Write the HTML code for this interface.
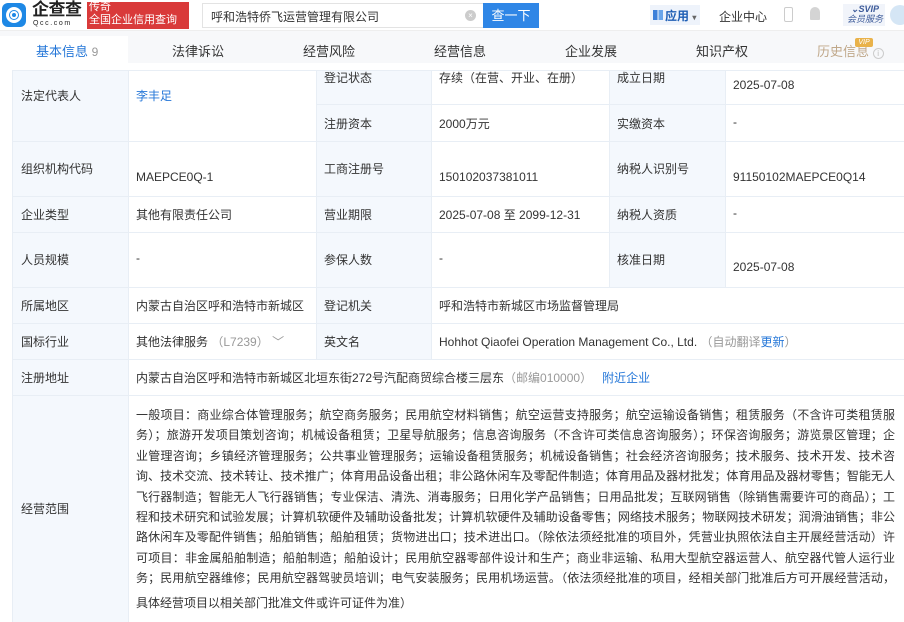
<!DOCTYPE html>
<html><head><meta charset="utf-8"><style>
*{margin:0;padding:0;box-sizing:border-box}
body{width:904px;height:622px;overflow:hidden;background:#fff;font-family:"Liberation Sans","Noto Sans CJK SC",sans-serif;font-size:12px;color:#333;position:relative}
.a{position:absolute}
.top{left:0;top:0;width:904px;height:31px;background:#fff;border-bottom:1px solid #eee}
.tabs{left:0;top:31px;width:904px;height:32px;background:#f7f8fa}
.tab{position:absolute;top:41px;font-size:13px;color:#333}
.lbl{background:#f4f8fd}
.l{position:absolute;background:#e8eef5}
</style></head><body>
<div class="a top"></div>
<!-- logo -->
<div class="a" style="left:2px;top:3px;width:24px;height:24px;border-radius:6px;background:#1e88e5"></div>
<div class="a" style="left:6px;top:7px;width:16px;height:16px;border-radius:50%;border:3px solid #fff"></div>
<div class="a" style="left:10px;top:11px;width:8px;height:8px;border-radius:50%;border:2px solid #fff"></div>
<div class="a" style="left:32px;top:0px;font-size:17px;line-height:20px;color:#222;font-weight:bold;letter-spacing:-0.5px">企查查</div>
<div class="a" style="left:33px;top:20px;font-size:7px;line-height:8px;color:#222;letter-spacing:1.6px">Qcc.com</div>
<div class="a" style="left:87px;top:2px;width:102px;height:27px;background:#d93a3a"></div>
<div class="a" style="left:89px;top:1px;font-size:11px;color:#fff;line-height:13px">传奇<br>全国企业信用查询</div>
<!-- search -->
<div class="a" style="left:202px;top:3px;width:282px;height:25px;border:1px solid #e3e3e3;border-right:none"></div>
<div class="a" style="left:211px;top:8px;font-size:12px;color:#333">呼和浩特侨飞运营管理有限公司</div>
<div class="a" style="left:465px;top:10px;width:11px;height:11px;border-radius:50%;background:#ccc;color:#fff;font-size:8px;line-height:11px;text-align:center">×</div>
<div class="a" style="left:483px;top:3px;width:56px;height:25px;background:#2f86e6;color:#fff;font-size:13px;text-align:center;line-height:25px">查一下</div>
<div class="a" style="left:650px;top:5px;width:50px;height:20px;background:#eef3fb"></div>
<div class="a" style="left:653px;top:10px;width:10px;height:10px;background:linear-gradient(90deg,#3b7fd9 45%,transparent 45%,transparent 55%,#6aa5ea 55%)"></div>
<div class="a" style="left:665px;top:7px;font-size:12px;color:#1f5fb5;font-weight:bold">应用 <span style="font-size:8px;color:#666">▾</span></div>
<div class="a" style="left:719px;top:8px;font-size:12px;color:#333">企业中心</div>
<div class="a" style="left:784px;top:7px;width:9px;height:15px;border:1px solid #ccc;border-radius:2px"></div>
<div class="a" style="left:810px;top:7px;width:10px;height:13px;background:#d4d4d4;border-radius:5px 5px 1px 1px"></div>
<div class="a" style="left:843px;top:4px;width:42px;height:22px;background:#f1f4fa"></div>
<div class="a" style="left:847px;top:4px;font-size:9px;color:#3c5a99;font-style:italic;font-weight:bold;line-height:10px;text-align:center">⌄SVIP<br><span style="font-weight:normal">会员服务</span></div>
<div class="a" style="left:890px;top:5px;width:20px;height:20px;border-radius:50%;background:#d5e6f5"></div>
<!-- tabs -->
<div class="a tabs"></div>
<div class="a" style="left:0;top:36px;width:128px;height:27px;background:#fff"></div>
<div class="tab" style="left:36px;color:#2577d8">基本信息 <span style="color:#999;font-size:12px">9</span></div>
<div class="tab" style="left:172px">法律诉讼</div>
<div class="tab" style="left:303px">经营风险</div>
<div class="tab" style="left:434px">经营信息</div>
<div class="tab" style="left:565px">企业发展</div>
<div class="tab" style="left:696px">知识产权</div>
<div class="tab" style="left:817px;color:#c0a88a">历史信息 <span style="display:inline-block;width:11px;height:11px;border:1px solid #ccc;border-radius:50%;font-size:8px;color:#bbb;text-align:center;line-height:9px">i</span></div>
<div class="a" style="left:855px;top:38px;width:18px;height:9px;background:#e9b24a;color:#fff;font-size:7px;font-style:italic;line-height:9px;text-align:center;border-radius:2px">VIP</div>
<!-- table bg -->
<div class="a lbl" style="left:12px;top:70px;width:116px;height:552px"></div>
<div class="a lbl" style="left:316px;top:70px;width:115px;height:217px"></div>
<div class="a lbl" style="left:609px;top:70px;width:116px;height:217px"></div>
<div class="a lbl" style="left:316px;top:287px;width:115px;height:72px"></div>
<!-- lines -->
<div class="l" style="left:12px;top:70px;width:892px;height:1px"></div>
<div class="l" style="left:316px;top:104px;width:588px;height:1px"></div>
<div class="l" style="left:12px;top:141px;width:892px;height:1px"></div>
<div class="l" style="left:12px;top:196px;width:892px;height:1px"></div>
<div class="l" style="left:12px;top:232px;width:892px;height:1px"></div>
<div class="l" style="left:12px;top:287px;width:892px;height:1px"></div>
<div class="l" style="left:12px;top:323px;width:892px;height:1px"></div>
<div class="l" style="left:12px;top:359px;width:892px;height:1px"></div>
<div class="l" style="left:12px;top:395px;width:892px;height:1px"></div>
<div class="l" style="left:12px;top:70px;width:1px;height:552px"></div>
<div class="l" style="left:128px;top:70px;width:1px;height:552px"></div>
<div class="l" style="left:316px;top:70px;width:1px;height:289px"></div>
<div class="l" style="left:431px;top:70px;width:1px;height:289px"></div>
<div class="l" style="left:609px;top:70px;width:1px;height:217px"></div>
<div class="l" style="left:725px;top:70px;width:1px;height:217px"></div>
<!-- text -->
<div class="a" style="left:21px;top:87px">法定代表人</div>
<div class="a" style="left:136px;top:87px;color:#2577d8">李丰足</div>
<div class="a" style="left:324px;top:69px">登记状态</div>
<div class="a" style="left:439px;top:69px">存续（在营、开业、在册）</div>
<div class="a" style="left:617px;top:69px">成立日期</div>
<div class="a" style="left:733px;top:78px">2025-07-08</div>
<div class="a" style="left:324px;top:115px">注册资本</div>
<div class="a" style="left:439px;top:115px">2000万元</div>
<div class="a" style="left:617px;top:115px">实缴资本</div>
<div class="a" style="left:733px;top:115px">-</div>
<div class="a" style="left:21px;top:160px">组织机构代码</div>
<div class="a" style="left:136px;top:170px">MAEPCE0Q-1</div>
<div class="a" style="left:324px;top:160px">工商注册号</div>
<div class="a" style="left:439px;top:170px">150102037381011</div>
<div class="a" style="left:617px;top:160px">纳税人识别号</div>
<div class="a" style="left:733px;top:170px">91150102MAEPCE0Q14</div>
<div class="a" style="left:21px;top:206px">企业类型</div>
<div class="a" style="left:136px;top:206px">其他有限责任公司</div>
<div class="a" style="left:324px;top:206px">营业期限</div>
<div class="a" style="left:439px;top:206px">2025-07-08 至 2099-12-31</div>
<div class="a" style="left:617px;top:206px">纳税人资质</div>
<div class="a" style="left:733px;top:206px">-</div>
<div class="a" style="left:21px;top:251px">人员规模</div>
<div class="a" style="left:136px;top:251px">-</div>
<div class="a" style="left:324px;top:251px">参保人数</div>
<div class="a" style="left:439px;top:251px">-</div>
<div class="a" style="left:617px;top:251px">核准日期</div>
<div class="a" style="left:733px;top:260px">2025-07-08</div>
<div class="a" style="left:21px;top:297px">所属地区</div>
<div class="a" style="left:136px;top:297px">内蒙古自治区呼和浩特市新城区</div>
<div class="a" style="left:324px;top:297px">登记机关</div>
<div class="a" style="left:439px;top:297px">呼和浩特市新城区市场监督管理局</div>
<div class="a" style="left:21px;top:333px">国标行业</div>
<div class="a" style="left:136px;top:333px">其他法律服务 <span style="color:#999">（L7239）</span> <span style="color:#999">﹀</span></div>
<div class="a" style="left:324px;top:333px">英文名</div>
<div class="a" style="left:439px;top:333px">Hohhot Qiaofei Operation Management Co., Ltd. <span style="color:#999">（自动翻译<span style="color:#2577d8">更新</span>）</span></div>
<div class="a" style="left:21px;top:369px">注册地址</div>
<div class="a" style="left:136px;top:369px">内蒙古自治区呼和浩特市新城区北垣东街272号汽配商贸综合楼三层东<span style="color:#999">（邮编010000）</span> &nbsp; <span style="color:#2577d8">附近企业</span></div>
<div class="a" style="left:21px;top:500px">经营范围</div>
<div class="a" style="left:136px;top:405px;width:759px;line-height:20.4px;text-align:justify;text-align-last:justify">
<div>一般项目：商业综合体管理服务；航空商务服务；民用航空材料销售；航空运营支持服务；航空运输设备销售；租赁服务（不含许可类租赁服</div>
<div>务）；旅游开发项目策划咨询；机械设备租赁；卫星导航服务；信息咨询服务（不含许可类信息咨询服务）；环保咨询服务；游览景区管理；企</div>
<div>业管理咨询；乡镇经济管理服务；公共事业管理服务；运输设备租赁服务；机械设备销售；社会经济咨询服务；技术服务、技术开发、技术咨</div>
<div>询、技术交流、技术转让、技术推广；体育用品设备出租；非公路休闲车及零配件制造；体育用品及器材批发；体育用品及器材零售；智能无人</div>
<div>飞行器制造；智能无人飞行器销售；专业保洁、清洗、消毒服务；日用化学产品销售；日用品批发；互联网销售（除销售需要许可的商品）；工</div>
<div>程和技术研究和试验发展；计算机软硬件及辅助设备批发；计算机软硬件及辅助设备零售；网络技术服务；物联网技术研发；润滑油销售；非公</div>
<div>路休闲车及零配件销售；船舶销售；船舶租赁；货物进出口；技术进出口。（除依法须经批准的项目外，凭营业执照依法自主开展经营活动）许</div>
<div>可项目：非金属船舶制造；船舶制造；船舶设计；民用航空器零部件设计和生产；商业非运输、私用大型航空器运营人、航空器代管人运行业</div>
<div>务；民用航空器维修；民用航空器驾驶员培训；电气安装服务；民用机场运营。（依法须经批准的项目，经相关部门批准后方可开展经营活动，</div>
<div style="margin-top:4px;text-align-last:left">具体经营项目以相关部门批准文件或许可证件为准）</div>
</div>
</body></html>
